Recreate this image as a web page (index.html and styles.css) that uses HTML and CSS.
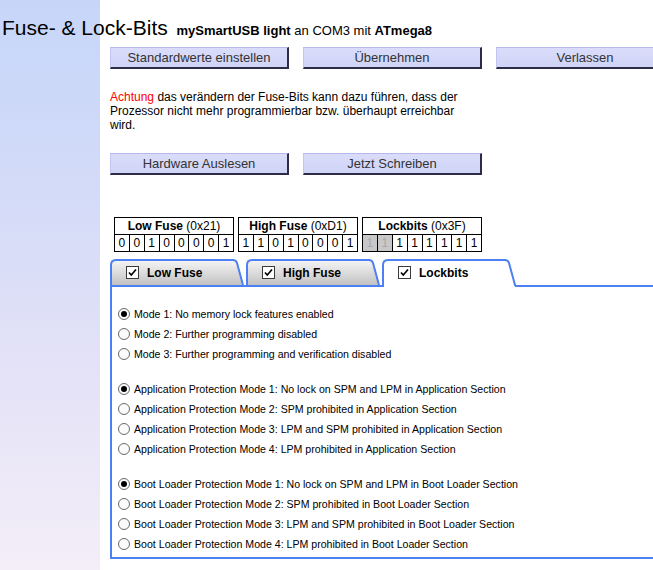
FILE: index.html
```html
<!DOCTYPE html>
<html lang="de">
<head>
<meta charset="utf-8">
<title>Fuse- &amp; Lock-Bits</title>
<link rel="stylesheet" href="styles.css">
</head>
<body>
<div class="page">
  <h1 class="title">Fuse- &amp; Lock-Bits <span class="sub"><b>mySmartUSB light</b> an COM3 mit <b>ATmega8</b></span></h1>
  <div class="content">
    <div class="btnrow">
      <button class="btn">Standardwerte einstellen</button>
      <button class="btn">Übernehmen</button>
      <button class="btn">Verlassen</button>
    </div>
    <p class="warn"><span class="red">Achtung</span> das verändern der Fuse-Bits kann dazu führen, dass der<br>Prozessor nicht mehr programmierbar bzw. überhaupt erreichbar<br>wird.</p>
    <div class="btnrow">
      <button class="btn">Hardware Auslesen</button>
      <button class="btn">Jetzt Schreiben</button>
    </div>

    <div class="bitrow">
      <table class="bits">
        <tr><th colspan="8"><b>Low Fuse</b> (0x21)</th></tr>
        <tr><td>0</td><td>0</td><td>1</td><td>0</td><td>0</td><td>0</td><td>0</td><td>1</td></tr>
      </table>
      <table class="bits">
        <tr><th colspan="8"><b>High Fuse</b> (0xD1)</th></tr>
        <tr><td>1</td><td>1</td><td>0</td><td>1</td><td>0</td><td>0</td><td>0</td><td>1</td></tr>
      </table>
      <table class="bits">
        <tr><th colspan="8"><b>Lockbits</b> (0x3F)</th></tr>
        <tr><td class="off">1</td><td class="off">1</td><td>1</td><td>1</td><td>1</td><td>1</td><td>1</td><td>1</td></tr>
      </table>
    </div>

    <div class="tabs">
      <div class="tab">
        <svg class="tabshape" viewBox="0 0 134 26" preserveAspectRatio="none" width="134" height="26">
          <defs><linearGradient id="tg" x1="0" y1="0" x2="0" y2="1"><stop offset="0" stop-color="#f6f6f6"/><stop offset="1" stop-color="#c2c2c2"/></linearGradient></defs>
          <path d="M1 26 V6 Q1 1 6 1 H123 Q126 1 127 4 L133 26" fill="url(#tg)" stroke="#4d7ff5" stroke-width="2"/>
        </svg>
        <svg class="chk" width="13" height="13" viewBox="0 0 13 13"><rect x="0.5" y="0.5" width="12" height="12" fill="#fff" stroke="#3a3a3a"/><path d="M3 6.5 L5.3 9 L10 3.5" fill="none" stroke="#000" stroke-width="1.7"/></svg>
        <span class="tablabel">Low Fuse</span>
      </div>
      <div class="tab">
        <svg class="tabshape" viewBox="0 0 134 26" preserveAspectRatio="none" width="134" height="26">
          <path d="M1 26 V6 Q1 1 6 1 H123 Q126 1 127 4 L133 26" fill="url(#tg)" stroke="#4d7ff5" stroke-width="2"/>
        </svg>
        <svg class="chk" width="13" height="13" viewBox="0 0 13 13"><rect x="0.5" y="0.5" width="12" height="12" fill="#fff" stroke="#3a3a3a"/><path d="M3 6.5 L5.3 9 L10 3.5" fill="none" stroke="#000" stroke-width="1.7"/></svg>
        <span class="tablabel">High Fuse</span>
      </div>
      <div class="tab active">
        <svg class="tabshape" viewBox="0 0 134 28" preserveAspectRatio="none" width="134" height="28">
          <path d="M1 28 V6 Q1 1 6 1 H123 Q126 1 127 4 L133 28 Z" fill="#fff" stroke="none"/>
          <path d="M1 28 V6 Q1 1 6 1 H123 Q126 1 127 4 L133 26 H134" fill="none" stroke="#4d7ff5" stroke-width="2"/>
        </svg>
        <svg class="chk" width="13" height="13" viewBox="0 0 13 13"><rect x="0.5" y="0.5" width="12" height="12" fill="#fff" stroke="#3a3a3a"/><path d="M3 6.5 L5.3 9 L10 3.5" fill="none" stroke="#000" stroke-width="1.7"/></svg>
        <span class="tablabel">Lockbits</span>
      </div>
    </div>

    <div class="panel">
      <div class="group">
        <label class="opt"><span class="radio on"></span>Mode 1: No memory lock features enabled</label>
        <label class="opt"><span class="radio"></span>Mode 2: Further programming disabled</label>
        <label class="opt"><span class="radio"></span>Mode 3: Further programming and verification disabled</label>
      </div>
      <div class="group">
        <label class="opt"><span class="radio on"></span>Application Protection Mode 1: No lock on SPM and LPM in Application Section</label>
        <label class="opt"><span class="radio"></span>Application Protection Mode 2: SPM prohibited in Application Section</label>
        <label class="opt"><span class="radio"></span>Application Protection Mode 3: LPM and SPM prohibited in Application Section</label>
        <label class="opt"><span class="radio"></span>Application Protection Mode 4: LPM prohibited in Application Section</label>
      </div>
      <div class="group">
        <label class="opt"><span class="radio on"></span>Boot Loader Protection Mode 1: No lock on SPM and LPM in Boot Loader Section</label>
        <label class="opt"><span class="radio"></span>Boot Loader Protection Mode 2: SPM prohibited in Boot Loader Section</label>
        <label class="opt"><span class="radio"></span>Boot Loader Protection Mode 3: LPM and SPM prohibited in Boot Loader Section</label>
        <label class="opt"><span class="radio"></span>Boot Loader Protection Mode 4: LPM prohibited in Boot Loader Section</label>
      </div>
    </div>
  </div>
</div>
</body>
</html>
```
FILE: styles.css
```css
html, body {
  margin: 0;
  padding: 0;
}
body {
  width: 653px;
  height: 570px;
  overflow: hidden;
  background: #fff;
  font-family: "Liberation Sans", Arial, sans-serif;
  color: #000;
}
.page {
  height: 570px;
  background: linear-gradient(180deg, #c6d6f9 0%, #d4dbf8 35%, #e4e2f7 65%, #f3eef8 100%) no-repeat left top / 100px 100%;
}
.title {
  margin: 0;
  padding: 15px 0 0 2px;
  height: 32px;
  font-weight: normal;
  font-size: 21px;
  line-height: 26px;
  white-space: nowrap;
}
.sub {
  font-size: 13px;
  margin-left: 3px;
}
.sub b {
  font-weight: bold;
}
.content {
  margin-left: 110px;
}
.btnrow {
  display: flex;
  gap: 14px;
  white-space: nowrap;
}
.btn {
  flex: 0 0 179px;
  width: 179px;
  height: 22px;
  padding: 0;
  margin: 0;
  background: linear-gradient(180deg, #dadcfa, #cfd4f6);
  border-style: solid;
  border-width: 1px 2px 2px 1px;
  border-color: #b8b8ea #2c2c48 #2c2c48 #c4c4f0;
  font-family: "Liberation Sans", Arial, sans-serif;
  font-size: 13px;
  color: #333;
  line-height: 18px;
}
.warn {
  margin: 21px 0 21px 0;
  font-size: 12px;
  line-height: 14px;
  white-space: nowrap;
  color: #000;
}
.red {
  color: #ff0000;
}
.bitrow {
  display: flex;
  gap: 4px;
  margin: 42px 0 0 4px;
}
.bits {
  border-collapse: collapse;
  table-layout: fixed;
  width: 120px;
  font-size: 12px;
}
.bits th {
  font-weight: normal;
  height: 16px;
  padding: 0;
  border: 1px solid #000;
  line-height: 15px;
  white-space: nowrap;
}
.bits td {
  height: 16px;
  padding: 0;
  border: 1px solid #000;
  text-align: center;
  line-height: 15px;
}
.bits td.off {
  background: #c8c8c8;
  color: #a8a8a8;
}
.tabs {
  display: flex;
  align-items: flex-end;
  gap: 2px;
  height: 26px;
  margin-top: 7px;
  position: relative;
  z-index: 1;
}
.tab {
  position: relative;
  width: 134px;
  height: 26px;
  flex: 0 0 134px;
}
.tab.active {
  height: 28px;
  margin-bottom: -2px;
}
.tabshape {
  position: absolute;
  left: 0;
  top: 0;
}
.chk {
  position: absolute;
  left: 16px;
  top: 7px;
}
.tablabel {
  position: absolute;
  left: 37px;
  top: 7px;
  font-weight: bold;
  font-size: 12px;
  line-height: 14px;
  white-space: nowrap;
}
.panel {
  width: 560px;
  height: 274px;
  border: 2px solid #4d7ff5;
  padding: 17px 0 0 6px;
  box-sizing: border-box;
  display: flex;
  flex-direction: column;
  gap: 15px;
}
.group {
  display: flex;
  flex-direction: column;
}
.opt {
  display: flex;
  align-items: center;
  height: 20px;
  font-size: 10.6px;
  white-space: nowrap;
}
.radio {
  width: 10px;
  height: 10px;
  border: 1px solid #6a6a6a;
  border-radius: 50%;
  background: #fbfbfb;
  margin-right: 4px;
  position: relative;
  flex: 0 0 auto;
}
.radio.on::after {
  content: "";
  position: absolute;
  left: 2px;
  top: 2px;
  width: 6px;
  height: 6px;
  border-radius: 50%;
  background: #000;
}
```
